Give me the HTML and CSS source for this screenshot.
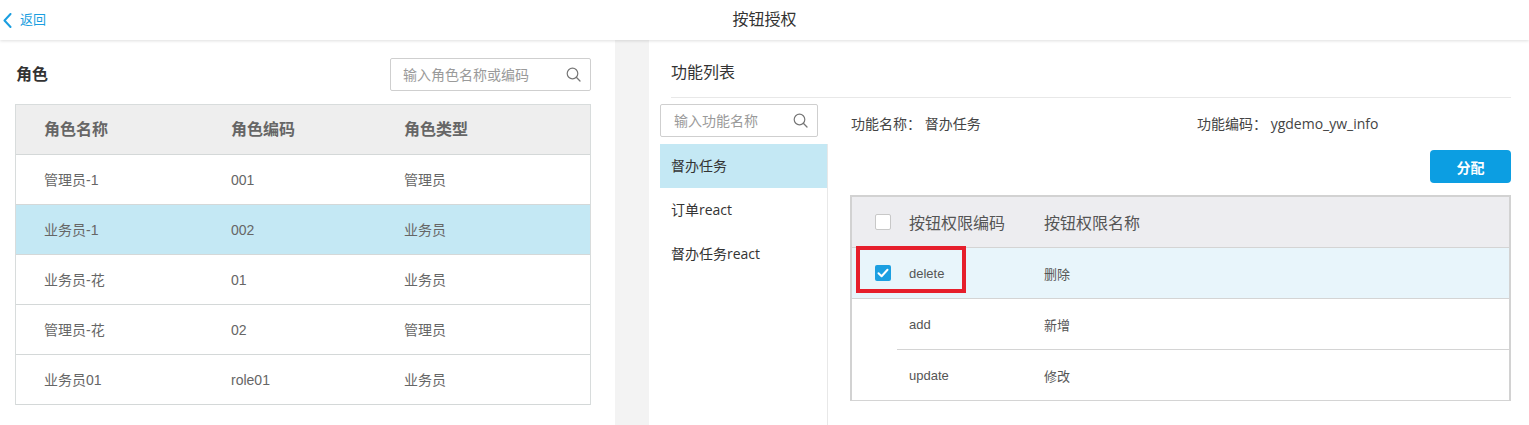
FILE: index.html
```
<!DOCTYPE html>
<html lang="zh-CN">
<head>
<meta charset="utf-8">
<title>按钮授权</title>
<link rel="stylesheet" href="styles.css">
</head>
<body>
<header class="topbar">
  <a class="back" href="#">
    <svg class="back-icon" width="9" height="15" viewBox="0 0 9 15"><path d="M7.5 1 L1.5 7.5 L7.5 14" fill="none" stroke="#1a9ee0" stroke-width="2" stroke-linecap="round" stroke-linejoin="round"/></svg>
    <span>返回</span>
  </a>
  <h1 class="title">按钮授权</h1>
  <div class="topbar-spacer"></div>
</header>
<main class="layout">
  <section class="role-panel">
    <div class="panel-head">
      <h2 class="panel-title">角色</h2>
      <label class="search search-role">
        <input type="text" placeholder="输入角色名称或编码">
        <svg class="search-icon" width="15" height="15" viewBox="0 0 15 15"><circle cx="6.5" cy="6.5" r="5.3" fill="none" stroke="#777" stroke-width="1.2"/><path d="M10.3 10.3 L14 14" stroke="#777" stroke-width="1.3" stroke-linecap="round"/></svg>
      </label>
    </div>
    <div class="role-table">
      <div class="rt-row rt-head"><div>角色名称</div><div>角色编码</div><div>角色类型</div></div>
      <div class="rt-row"><div>管理员-1</div><div>001</div><div>管理员</div></div>
      <div class="rt-row is-selected"><div>业务员-1</div><div>002</div><div>业务员</div></div>
      <div class="rt-row"><div>业务员-花</div><div>01</div><div>业务员</div></div>
      <div class="rt-row"><div>管理员-花</div><div>02</div><div>管理员</div></div>
      <div class="rt-row"><div>业务员01</div><div>role01</div><div>业务员</div></div>
    </div>
  </section>
  <div class="gutter"></div>
  <section class="func-panel">
    <h2 class="func-title">功能列表</h2>
    <div class="func-body">
      <aside class="func-side">
        <label class="search search-func">
          <input type="text" placeholder="输入功能名称">
          <svg class="search-icon" width="15" height="15" viewBox="0 0 15 15"><circle cx="6.5" cy="6.5" r="5.3" fill="none" stroke="#777" stroke-width="1.2"/><path d="M10.3 10.3 L14 14" stroke="#777" stroke-width="1.3" stroke-linecap="round"/></svg>
        </label>
        <ul class="func-list">
          <li class="is-active">督办任务</li>
          <li>订单react</li>
          <li>督办任务react</li>
        </ul>
      </aside>
      <div class="func-detail">
        <div class="info-row">
          <span class="info-item">功能名称： 督办任务</span>
          <span class="info-item">功能编码： ygdemo_yw_info</span>
        </div>
        <div class="actions"><button class="btn-primary" type="button">分配</button></div>
        <div class="btn-table">
          <div class="bt-row bt-head">
            <div class="bt-check"><span class="checkbox"></span></div>
            <div class="bt-cell">按钮权限编码</div>
            <div class="bt-cell">按钮权限名称</div>
          </div>
          <div class="bt-row is-checked">
            <div class="bt-check"><span class="checkbox checked"><svg width="16" height="16" viewBox="0 0 16 16"><path d="M3.5 8.2 L6.6 11.2 L12.5 4.8" fill="none" stroke="#fff" stroke-width="2" stroke-linecap="round" stroke-linejoin="round"/></svg></span></div>
            <div class="bt-cell">delete</div>
            <div class="bt-cell">删除</div>
          </div>
          <div class="bt-row">
            <div class="bt-check no-line"></div>
            <div class="bt-cell">add</div>
            <div class="bt-cell">新增</div>
          </div>
          <div class="bt-row">
            <div class="bt-check"></div>
            <div class="bt-cell">update</div>
            <div class="bt-cell">修改</div>
          </div>
          <div class="annotation"></div>
        </div>
      </div>
    </div>
  </section>
</main>
</body>
</html>
```
FILE: styles.css
```
* { box-sizing: border-box; }
html, body { margin: 0; padding: 0; }
body {
  width: 1529px;
  height: 425px;
  overflow: hidden;
  background: #fff;
  font-family: "Liberation Sans", "Noto Sans CJK SC", sans-serif;
  color: #333;
}

/* top bar */
.topbar {
  position: relative;
  z-index: 2;
  height: 40px;
  display: grid;
  grid-template-columns: 1fr auto 1fr;
  align-items: center;
  background: #fff;
  box-shadow: 0 1px 3px rgba(0, 0, 0, 0.13);
}
.back {
  display: flex;
  align-items: center;
  gap: 8px;
  padding-left: 3px;
  color: #1a9ee0;
  font-size: 13px;
  text-decoration: none;
  line-height: 18px;
}
.back-icon { display: block; }
.title {
  margin: 0;
  font-size: 16px;
  font-weight: normal;
  color: #333;
  line-height: 22px;
}

/* layout */
.layout {
  display: flex;
  height: 385px;
  background: #f3f3f3;
}
.gutter { width: 34px; flex: none; }

/* role panel */
.role-panel {
  width: 615px;
  flex: none;
  background: #fff;
  padding: 18px 24px 0 15px;
}
.panel-head {
  display: flex;
  justify-content: space-between;
  align-items: center;
  height: 33px;
}
.panel-title {
  margin: 0;
  padding-left: 1px;
  font-size: 16px;
  font-weight: bold;
  color: #333;
  line-height: 22px;
}
.search {
  display: flex;
  align-items: center;
  height: 33px;
  border: 1px solid #cfcfcf;
  border-radius: 2px;
  background: #fff;
}
.search input {
  flex: 1;
  min-width: 0;
  height: 100%;
  border: 0;
  outline: 0;
  background: transparent;
  font-family: inherit;
  font-size: 14px;
  color: #333;
  padding: 0;
}
.search input::placeholder { color: #9a9a9a; }
.search-icon { flex: none; display: block; }
.search-role { width: 201px; padding: 0 9px 0 12px; }
.search-func { width: 158px; padding: 0 9px 0 13px; }

.role-table {
  margin-top: 13px;
  border: 1px solid #d8dcdc;
  border-bottom: 0;
}
.rt-row {
  display: grid;
  grid-template-columns: 187px 173px 1fr;
  align-items: center;
  height: 50px;
  padding-left: 28px;
  border-bottom: 1px solid #d4d8d8;
  font-size: 14px;
  color: #666;
  line-height: 20px;
}
.rt-head {
  background: #eeeeee;
  font-size: 16px;
  font-weight: bold;
  color: #666;
}
.rt-row.is-selected { background: #c4e8f4; }

/* function panel */
.func-panel {
  flex: 1;
  display: flex;
  flex-direction: column;
  background: #fff;
  padding: 0 18px 0 11px;
}
.func-title {
  flex: none;
  margin: 0 0 0 11px;
  padding: 22px 0 13px;
  font-size: 16px;
  font-weight: normal;
  color: #333;
  line-height: 22px;
  border-bottom: 1px solid #e8e8e8;
}
.func-body {
  flex: 1;
  display: flex;
}
.func-side {
  width: 168px;
  flex: none;
  display: flex;
  flex-direction: column;
  padding-top: 6px;
}
.func-list {
  list-style: none;
  margin: 7px 0 0;
  padding: 0;
  flex: 1;
  border-right: 1px solid #e8e8e8;
}
.func-list li {
  height: 44px;
  line-height: 44px;
  padding-left: 11px;
  font-family: "Open Sans", "Noto Sans CJK SC", sans-serif;
  font-size: 14px;
  color: #333;
}
.func-list li.is-active { background: #c4e8f4; }

.func-detail {
  flex: 1;
  padding-left: 23px;
}
.info-row {
  display: grid;
  grid-template-columns: 346px 1fr;
  padding-top: 16px;
  line-height: 20px;
  font-family: "Open Sans", "Noto Sans CJK SC", sans-serif;
  font-size: 14px;
  color: #444;
}
.actions {
  display: flex;
  justify-content: flex-end;
  margin-top: 16px;
}
.btn-primary {
  width: 81px;
  height: 33px;
  border: 0;
  border-radius: 4px;
  background: #0c9ee2;
  color: #fff;
  font-family: inherit;
  font-size: 14px;
  font-weight: bold;
  padding: 0;
}

.btn-table {
  position: relative;
  margin: 12px 0 0 -1px;
  border: 2px solid #d2d2d2;
  border-bottom: 0;
}
.bt-row {
  display: grid;
  grid-template-columns: 45px 135px 1fr;
  height: 51px;
  background: #fff;
}
.bt-row > div {
  display: flex;
  align-items: center;
  border-bottom: 1px solid #d4d4d4;
}
.bt-row > div.no-line { border-bottom-color: transparent; }
.bt-head { background: #ededf0; }
.bt-row.is-checked { background: #e8f5fb; }
.bt-check { padding-left: 23px; }
.bt-cell {
  padding-left: 12px;
  font-size: 13px;
  color: #555;
}
.bt-head .bt-cell { font-size: 16px; color: #555; }
.checkbox {
  display: block;
  width: 16px;
  height: 16px;
  border: 1px solid #c8c8c8;
  border-radius: 2px;
  background: #fff;
}
.checkbox.checked {
  border: 0;
  background: #1c9fe1;
}
.checkbox svg { display: block; }

.annotation {
  position: absolute;
  left: 4px;
  top: 49px;
  width: 110px;
  height: 47px;
  border: 4px solid #e61e2b;
  pointer-events: none;
}
```
